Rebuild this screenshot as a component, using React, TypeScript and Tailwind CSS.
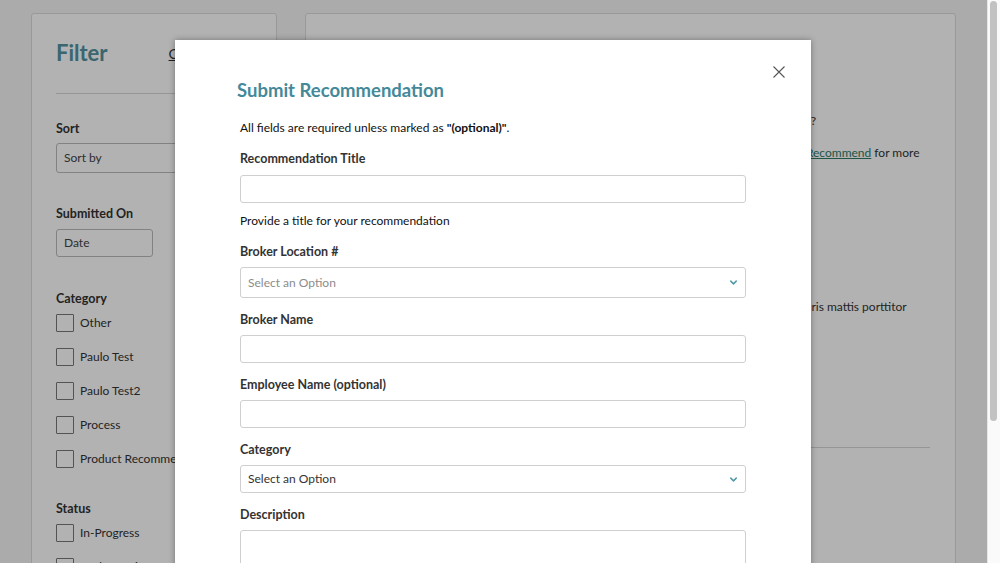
import { ChevronDown } from "lucide-react";

const categories = ["Other", "Paulo Test", "Paulo Test2", "Process", "Product Recommendation"];
const statuses = ["In-Progress", "Under Review", "Completed"];

function Checkbox({ label }: { label: string }) {
  return (
    <label className="flex items-center gap-[6px] text-[12px] text-[#333]">
      <span className="size-[18px] shrink-0 rounded-[1px] border border-[#777] bg-white" />
      {label}
    </label>
  );
}

function FilterPanel() {
  return (
    <aside className="h-[620px] w-[246px] shrink-0 rounded-[3px] border border-[#dcdcdc] bg-white px-[24px] pt-[25px]">
      <div className="flex items-center gap-[61px]">
        <h2 className="text-[22px] leading-[28px] font-bold text-[#54939f]">Filter</h2>
        <a href="#" className="text-[14px] text-[#333] underline">Clear Filters</a>
      </div>
      <hr className="mt-[26px] border-[#d6d6d6]" />

      <div className="mt-[27px] text-[12.5px] leading-[16px] font-bold text-[#333]">Sort</div>
      <div className="mt-[6px] flex h-[30px] items-center rounded-[3px] border border-[#bbb] px-[7px] text-[12px] text-[#444]">
        Sort by
      </div>

      <div className="mt-[33px] text-[12.5px] leading-[16px] font-bold text-[#333]">Submitted On</div>
      <div className="mt-[7px] flex h-[28px] w-[97px] items-center rounded-[3px] border border-[#bbb] px-[7px] text-[12px] text-[#444]">
        Date
      </div>

      <div className="mt-[34px] text-[12.5px] leading-[16px] font-bold text-[#333]">Category</div>
      <div className="mt-[7px] flex flex-col gap-[16px]">
        {categories.map((c) => (
          <Checkbox key={c} label={c} />
        ))}
      </div>

      <div className="mt-[33px] text-[12.5px] leading-[16px] font-bold text-[#333]">Status</div>
      <div className="mt-[7px] flex flex-col gap-[16px]">
        {statuses.map((s) => (
          <Checkbox key={s} label={s} />
        ))}
      </div>
    </aside>
  );
}

function ListPanel() {
  return (
    <section className="h-[620px] w-[651px] shrink-0 rounded-[3px] border border-[#dcdcdc] bg-white px-[25px] pt-[25px] text-[12px] leading-[16px] text-[#333]">
      <h2 className="text-[22px] leading-[28px] font-bold text-[#54939f]">Recommendations</h2>
      <p className="mt-[46px]">
        Do you have an idea that could improve the way we work with our brokers and our partners?
      </p>
      <p className="mt-[16px]">
        Share all your ideas and suggestions with the team by using the form on this page. Choose{" "}
        <a href="#" className="text-[#2f7a66] underline">Recommend</a> for more information on how they get reviewed.
      </p>

      <div className="mt-[70px] text-[14px] font-bold">Improve the onboarding experience for new brokers</div>
      <div className="mt-[6px] text-[11px] text-[#666]">Submitted on 03/14/2024 · Process</div>
      <p className="mt-[14px]">
        Lorem ipsum dolor sit amet, consectetur adipisicing elit, do eiusmod tempor incididunt, Mauris mattis porttitor tellus, vitae lacinia nunc fermentum in. Donec sed dolor at neque posuere.
      </p>
      <hr className="mt-[116px] border-[#d6d6d6]" />
    </section>
  );
}

function Field({ label, children }: { label: string; children: React.ReactNode }) {
  return (
    <div className="mb-[14px]">
      <div className="mb-[7px] text-[12.5px] leading-[16px] font-bold text-[#333]">{label}</div>
      {children}
    </div>
  );
}

function Select({ value, placeholder }: { value: string; placeholder?: boolean }) {
  return (
    <div className="flex h-full items-center justify-between rounded-[3px] border border-[#cfcfcf] bg-white pr-[6px] pl-[7px]">
      <span className={placeholder ? "text-[12px] text-[#8c8c8c]" : "text-[12px] text-[#333]"}>{value}</span>
      <ChevronDown className="size-[11px] text-[#4f9aa6]" strokeWidth={3.2} />
    </div>
  );
}

function RecommendationModal() {
  return (
    <div className="absolute top-[40px] left-[175px] h-[600px] w-[636px] bg-white px-[65px] pt-[38px] shadow-[0_0_6px_rgba(0,0,0,0.35)]">
      <button type="button" className="absolute top-[26px] right-[26px] flex text-[#555]">
        <svg width="12" height="12" viewBox="0 0 12 12" fill="none" stroke="currentColor" strokeWidth="1.1">
          <path d="M0.5 0.5L11.5 11.5M11.5 0.5L0.5 11.5" />
        </svg>
        <span className="sr-only">Close</span>
      </button>

      <h2 className="-ml-[3px] text-[18.5px] leading-[24px] font-bold text-[#44899a]">Submit Recommendation</h2>
      <p className="mt-[18px] text-[12px] leading-[16px] text-[#111]">
        All fields are required unless marked as <b>"(optional)"</b>.
      </p>

      <div className="mt-[15px]">
        <div className="mb-[15px]">
          <div className="mb-[8px] text-[12.5px] leading-[16px] font-bold text-[#333]">Recommendation Title</div>
          <div className="h-[28px] rounded-[3px] border border-[#cfcfcf]" />
          <p className="mt-[10px] text-[12px] leading-[16px] text-[#111]">Provide a title for your recommendation</p>
        </div>
        <Field label="Broker Location #">
          <div className="h-[31px]">
            <Select value="Select an Option" placeholder />
          </div>
        </Field>
        <Field label="Broker Name">
          <div className="h-[28px] rounded-[3px] border border-[#cfcfcf]" />
        </Field>
        <Field label="Employee Name (optional)">
          <div className="h-[28px] rounded-[3px] border border-[#cfcfcf]" />
        </Field>
        <Field label="Category">
          <div className="h-[28px]">
            <Select value="Select an Option" />
          </div>
        </Field>
        <Field label="Description">
          <div className="h-[90px] rounded-[3px] border border-[#cfcfcf]" />
        </Field>
      </div>
    </div>
  );
}

export default function App() {
  return (
    <div className="flex h-[563px] overflow-hidden bg-[#f5f5f5] font-[Lato,sans-serif]">
      <div className="relative flex-1 overflow-hidden">
        <div className="flex gap-[28px] pt-[13px] pl-[31px]">
          <FilterPanel />
          <ListPanel />
        </div>
        <div className="absolute inset-0 bg-black/30" />
        <RecommendationModal />
      </div>
      <div className="w-[13px] shrink-0 border-l border-[#e6e6e6] bg-[#fafafa] pt-[1px] pl-[2px]">
        <div className="h-[420px] w-[7px] rounded-full bg-[#c2c2c2]" />
      </div>
    </div>
  );
}
